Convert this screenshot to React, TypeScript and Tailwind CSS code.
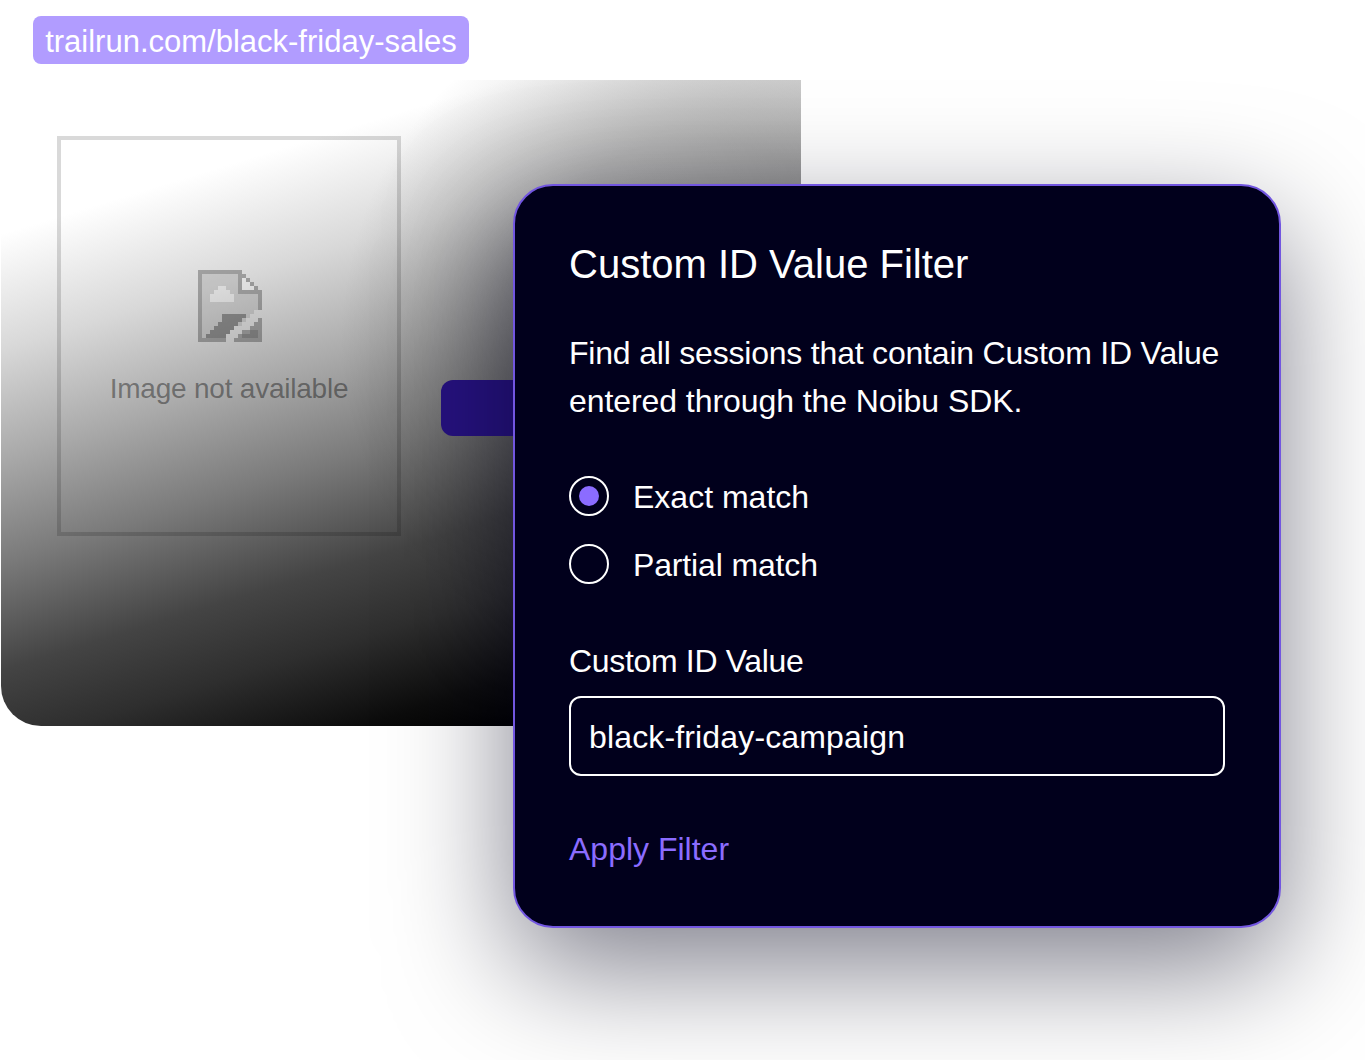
const iconRows = [
  "ccccccccccc.....",
  "cbbbbbbbbbcc....",
  "cbbbbbbbbbcwc...",
  "cbbbbbbbbbcwwc..",
  "cbbbbllbbbcwwwc.",
  "cbbbllllbbcccccc",
  "cbbllllllbbbbbbc",
  "cbbllllllbbbbbbc",
  "cbbbbbbbbbbbbbbc",
  "cbbbbbbbbbbbbbbc",
  "cbbbbbbbbbbbbb..",
  "cbbbbbddddddb...",
  "cbbbbbdddddb...c",
  "cbbbbdddddb...cc",
  "cbbbddddd....ccc",
  "cbbddddd...ccddc",
  "cbddddd...cddddc",
  "ccccccc..ccccccc",
]

const iconFill: Record<string, string> = {
  c: "rgba(0,0,0,0.28)",
  b: "rgba(0,0,0,0.1)",
  l: "rgba(255,255,255,0.1)",
  d: "rgba(0,0,0,0.38)",
  w: "rgba(255,255,255,0.25)",
}

const BrokenImageIcon = () => (
  <svg className="ml-0.5" width="64" height="72" viewBox="0 0 16 18" shapeRendering="crispEdges">
    {iconRows.map((row, y) =>
      row.split("").map((ch, x) =>
        ch === "." ? null : <rect key={`${x}-${y}`} x={x} y={y} width="1" height="1" fill={iconFill[ch]} />
      )
    )}
  </svg>
)

const Radio = ({ label, checked, className }: { label: string; checked?: boolean; className?: string }) => (
  <div className="flex items-center gap-6 h-10">
    <div className="w-10 h-10 rounded-full border-2 border-white flex items-center justify-center">
      {checked && <div className="w-5 h-5 rounded-full bg-[#8b6cff]" />}
    </div>
    <span className={`text-[32px] leading-10 pt-0.5 text-white ${className ?? ""}`}>{label}</span>
  </div>
)

const App = () => {
  return (
    <div className="relative w-[1365px] h-[1060px] overflow-hidden bg-white font-['Liberation_Sans',Arial,sans-serif]">
      <div className="ml-[33px] mt-4 w-[436px] h-12 pt-1 rounded-lg bg-[#b19cff] flex items-center justify-center text-[31px] text-white whitespace-nowrap">
        trailrun.com/black-friday-sales
      </div>

      <div className="relative ml-px mt-4 w-[800px] h-[646px] rounded-bl-[40px] bg-blend-multiply bg-[radial-gradient(circle_at_700px_260px,#b8b8b8_0,#d0d0d0_200px,#ebebeb_290px,#ffffff_360px),linear-gradient(163deg,#ffffff_17.3%,#d8d8d8_30.3%,#aaaaaa_42.4%,#7a7a7a_54.3%,#444444_66.3%,#2e2e2e_75%,#0c0c0c_84.8%,#000000_90%)]">
        <div className="ml-14 pt-14">
          <div className="w-[344px] h-[400px] border-4 border-black/15 flex flex-col items-center pt-[130px]">
            <BrokenImageIcon />
            <div className="mt-[31px] text-[28px] leading-8 tracking-[-0.22px] text-black/40 whitespace-nowrap">Image not available</div>
          </div>
        </div>
        <div className="absolute left-[440px] top-[300px] w-[200px] h-14 rounded-xl bg-[#26127f]" />
      </div>

      <div className="absolute left-[513px] top-[184px] w-[768px] h-[744px] rounded-[40px] border-2 border-[#7256e0] bg-[#01001c] shadow-[0_40px_120px_rgba(1,0,26,0.5)] pl-[54px] pr-[54px] pt-[54px] text-white">
        <h2 className="text-[40px] leading-12 font-normal whitespace-nowrap">Custom ID Value Filter</h2>
        <p className="mt-[41px] text-[32px] leading-12 whitespace-nowrap">
          <span className="tracking-[-0.2px]">Find all sessions that contain Custom ID Value</span>
          <br />
          <span className="tracking-[-0.07px]">entered through the Noibu SDK.</span>
        </p>
        <div className="mt-[51px] flex flex-col gap-7">
          <Radio label="Exact match" checked />
          <Radio label="Partial match" className="tracking-[-0.15px]" />
        </div>
        <div className="mt-[53px] text-[32px] leading-12 tracking-[-0.33px]">Custom ID Value</div>
        <div className="mt-[11px] h-20 rounded-xl border-2 border-white flex items-center px-[18px] pt-0.5 text-[32px] tracking-[0.15px]">
          black-friday-campaign
        </div>
        <div className="mt-[49px] text-[32px] leading-12 text-[#8b6cff]">Apply Filter</div>
      </div>
    </div>
  )
}

export default App
